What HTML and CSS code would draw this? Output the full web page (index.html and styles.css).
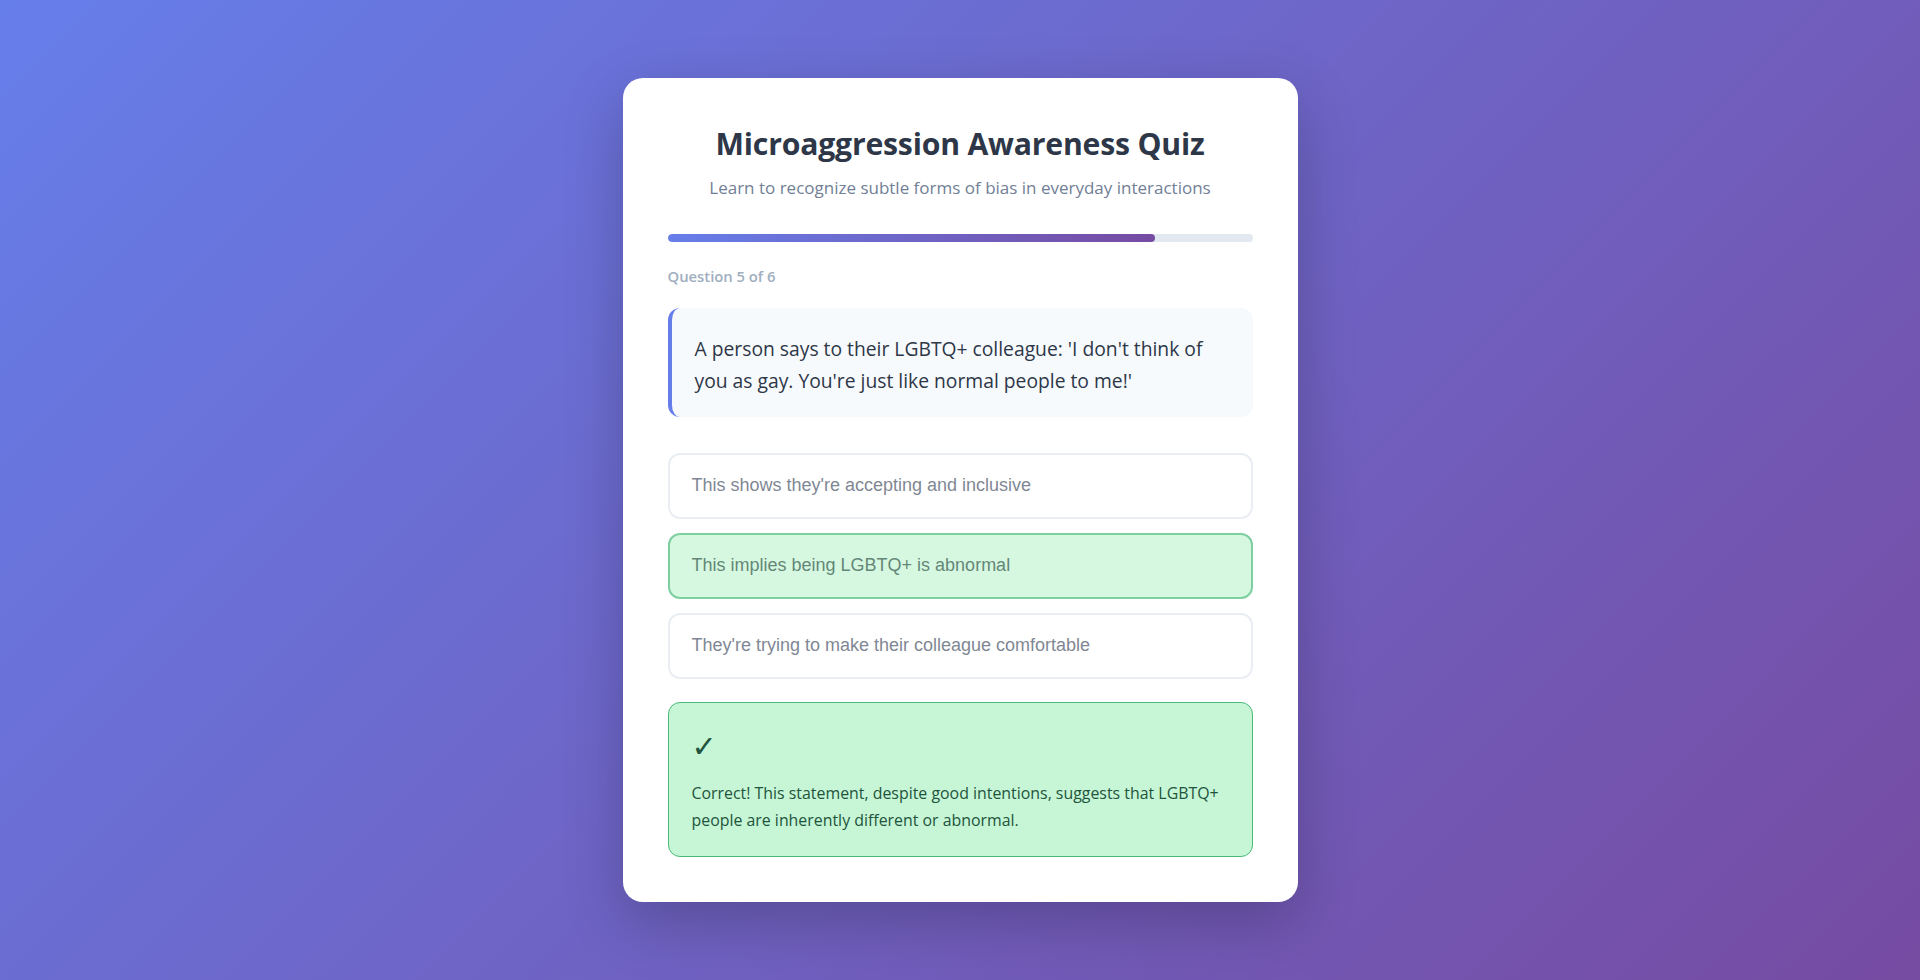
FILE: index.html
```html
<!DOCTYPE html>
<html lang="en">
<head>
<meta charset="utf-8">
<title>Microaggression Awareness Quiz</title>
<link rel="stylesheet" href="styles.css">
</head>
<body>
<main class="card">
  <h1 class="title">Microaggression Awareness Quiz</h1>
  <p class="subtitle">Learn to recognize subtle forms of bias in everyday interactions</p>
  <div class="progress"><div class="progress-fill" style="width: 83.333%"></div></div>
  <div class="counter">Question 5 of 6</div>
  <div class="question">A person says to their LGBTQ+ colleague: 'I don't think of you as gay. You're just like normal people to me!'</div>
  <div class="options">
    <button class="option" disabled>This shows they're accepting and inclusive</button>
    <button class="option option-correct" disabled>This implies being LGBTQ+ is abnormal</button>
    <button class="option" disabled>They're trying to make their colleague comfortable</button>
  </div>
  <div class="feedback">
    <div class="feedback-icon">✓</div>
    <p class="feedback-text">Correct! This statement, despite good intentions, suggests that LGBTQ+ people are inherently different or abnormal.</p>
  </div>
</main>
</body>
</html>
```
FILE: styles.css
```css
* { box-sizing: border-box; }

html, body { height: 100%; }

body {
  margin: 0;
  min-height: 100vh;
  display: flex;
  align-items: center;
  justify-content: center;
  background: linear-gradient(135deg, #667eea 0%, #764ba2 100%);
  font-family: "Open Sans", "Noto Sans", sans-serif;
  color: #2d3748;
}

.card {
  width: 675px;
  background: #ffffff;
  border-radius: 20px;
  padding: 45px;
  box-shadow: 0 20px 60px rgba(0, 0, 0, 0.22);
}

.title {
  margin: 0;
  text-align: center;
  font-size: 30.2px;
  line-height: 41.6px;
  font-weight: 700;
  color: #2d3748;
  letter-spacing: -0.2px;
}

.subtitle {
  margin: 11px 0 0;
  text-align: center;
  font-size: 17px;
  line-height: 26.4px;
  color: #718096;
}

.progress {
  margin-top: 32px;
  height: 8px;
  background: #e2e8f0;
  border-radius: 4px;
  overflow: hidden;
}

.progress-fill {
  height: 100%;
  border-radius: 4px;
  background: linear-gradient(90deg, #667eea 0%, #764ba2 100%);
}

.counter {
  margin-top: 24px;
  font-size: 14.8px;
  line-height: 21.6px;
  font-weight: 600;
  color: #a0aec0;
}

.question {
  margin-top: 21px;
  background: #f7fafc;
  border-left: 4px solid #667eea;
  border-radius: 12px;
  padding: 24.5px 23px 19.5px;
  font-size: 19.3px;
  line-height: 32.5px;
  color: #2d3748;
}

.options {
  margin-top: 36px;
  display: flex;
  flex-direction: column;
  gap: 14.4px;
}

.option {
  display: block;
  width: 100%;
  text-align: left;
  background: #ffffff;
  border: 2px solid #e2e8f0;
  border-radius: 12px;
  padding: 20px 22px;
  font-family: "Liberation Sans", Arial, sans-serif;
  font-size: 18px;
  line-height: 21.6px;
  color: #4a5568;
  opacity: 0.7;
}

.option-correct {
  background: #c6f6d5;
  border-color: #48bb78;
  color: #22543d;
}

.feedback {
  margin-top: 23.4px;
  background: #c6f6d5;
  border: 1px solid #48bb78;
  border-radius: 12px;
  padding: 26px 23px 22px;
  color: #22543d;
}

.feedback-icon {
  font-family: "DejaVu Sans", sans-serif;
  font-size: 30px;
  font-weight: 700;
  line-height: 36px;
}

.feedback-text {
  margin: 15px 0 0;
  font-size: 15.9px;
  line-height: 27px;
}
```
